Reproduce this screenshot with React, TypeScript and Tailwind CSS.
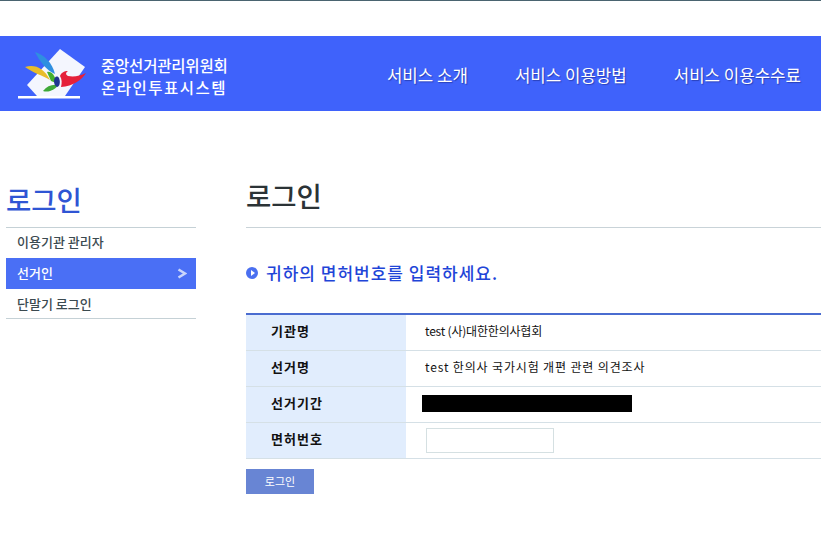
const FONT = "font-['Noto_Sans_CJK_KR','Noto_Sans',sans-serif]";

const NAV = ["서비스 소개", "서비스 이용방법", "서비스 이용수수료"];

const ROWS = [
  { label: "기관명", value: "test (사)대한한의사협회", cls: "tracking-[-0.2px]" },
  { label: "선거명", value: "test 한의사 국가시험 개편 관련 의견조사", cls: "tracking-[0.85px]" },
];

function Logo() {
  return (
    <svg width="72" height="54" viewBox="0 0 72 54" className="shrink-0">
      <path d="M44 2 L69 20 L49 49 L21 49 L11 38 Z" fill="#f4f6fe" />
      <rect x="2" y="49" width="62" height="2.5" fill="#fff" />
      <path d="M19 5 C28 8 36 15 39 27 C31 24 24 15 19 5 Z" fill="#2f8fe0" />
      <path d="M9 20 C19 17 28 21 34 33 C26 28 17 26 9 20 Z" fill="#e8bc2a" />
      <path d="M31 25 C35 24 39 27 40 36 L35 34 Z" fill="#44b02e" />
      <path d="M27 44 C31 39 36 37 42 38 C40 42 33 46 27 44 Z" fill="#3fa93a" />
      <path d="M38 34 C38 30 41 28 43 31 C45 36 43 40 41 40 C39 39 38 37 38 34 Z" fill="#1f3590" />
      <path d="M44 29 C45 26 48 24 52 24 C49 26 50 28 52 29 C58 30 64 29 70 26 C66 33 57 39 45 40 C46 36 46 32 44 29 Z" fill="#e5203a" />
    </svg>
  );
}

function Row({ label, children }: { label: string; children: React.ReactNode }) {
  return (
    <div className="flex h-9 border-b border-[#d5e0e6]">
      <div className="flex w-40 shrink-0 items-center bg-[#e1edfd] pb-0.5 pl-[25px] text-[13px] font-bold tracking-[1px] text-[#111]">
        {label}
      </div>
      <div className="flex flex-1 items-center pb-0.5 pl-[19px] text-[12px] text-[#111]">{children}</div>
    </div>
  );
}

export default function App() {
  return (
    <div className={`${FONT} h-[540px] w-[821px] overflow-hidden bg-white`}>
      <div className="h-px bg-[#4a6470]" />
      <header className="mt-[35px] flex h-[75px] items-center justify-between bg-[#3f62fb] pr-5 pl-4">
        <div className="flex items-center gap-[13px]">
          <Logo />
          <div className="pt-1 text-[15.5px] leading-[22px] font-medium text-white">
            <div className="tracking-[-0.2px]">중앙선거관리위원회</div>
            <div className="tracking-[1.5px]">온라인투표시스템</div>
          </div>
        </div>
        <nav className="flex gap-[47px] pt-1 text-[16.8px] text-white [text-shadow:1px_1px_1px_rgba(0,0,60,0.35)]">
          {NAV.map((n) => (
            <span key={n}>{n}</span>
          ))}
        </nav>
      </header>

      <div className="mt-[67px] flex">
        <aside className="ml-1.5 w-[190px] shrink-0">
          <h2 className="h-[49px] text-[27.5px] leading-[42px] font-medium text-[#2f55d4]">로그인</h2>
          <ul className="text-[13px] font-medium text-[#3b4a50]">
            <li className="flex h-[31px] items-center border-t border-[#c5d1d6] pb-0.5 pl-[11px]">이용기관 관리자</li>
            <li className="flex h-[31px] items-center justify-between bg-[#4a6ff5] pr-[9px] pl-[11px] text-white">
              <span className="pb-0.5">선거인</span>
              <svg width="10" height="11" viewBox="0 0 10 11">
                <path d="M1.5 1.5 L8 5.5 L1.5 9.5" fill="none" stroke="#c9d5fb" strokeWidth="2.6" />
              </svg>
            </li>
            <li className="flex h-[30px] items-center border-b border-[#c5d1d6] pl-[11px]">단말기 로그인</li>
          </ul>
        </aside>

        <main className="ml-[50px] flex-1">
          <h1 className="h-[50px] border-b border-[#c9d3d8] text-[27.5px] leading-[34px] font-medium text-[#2b3336]">로그인</h1>
          <div className="mt-[32px] flex items-center gap-[8px] text-[17px] font-medium tracking-[1px] text-[#1f45d8]">
            <span className="flex h-3 w-3 items-center justify-center rounded-full bg-[#4a6ff0]">
              <span className="ml-px border-y-[3px] border-l-[4px] border-y-transparent border-l-white" />
            </span>
            귀하의 면허번호를 입력하세요.
          </div>
          <div className="mt-[27px] border-t-2 border-[#4a6cd0]">
            {ROWS.map((r) => (
              <Row key={r.label} label={r.label}>
                <span className={r.cls}>{r.value}</span>
              </Row>
            ))}
            <Row label="선거기간">
              <div className="ml-[-3px] h-[17px] w-[210px] bg-black" />
            </Row>
            <Row label="면허번호">
              <input className="mt-0.5 ml-px h-[25px] w-[128px] border border-[#d5e0e2] bg-white" />
            </Row>
          </div>
          <button className="mt-[10px] flex h-[25px] w-[68px] items-center justify-center bg-[#6885d4] text-[11px] text-white">
            로그인
          </button>
        </main>
      </div>
    </div>
  );
}
